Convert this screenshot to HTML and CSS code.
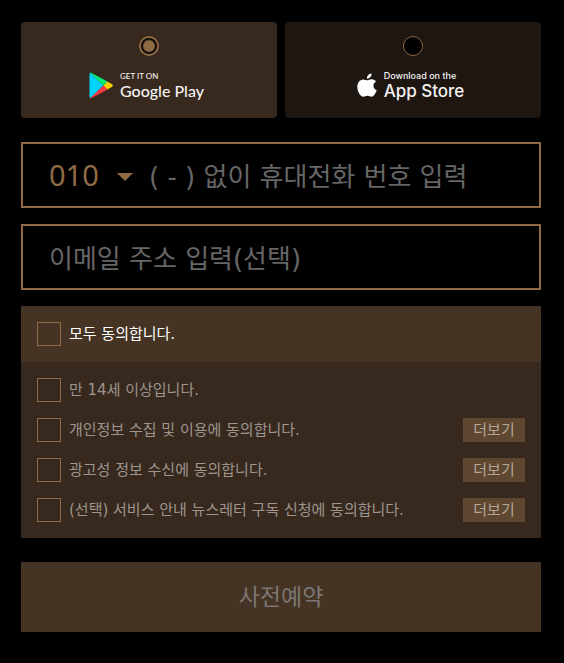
FILE: index.html
```html
<!DOCTYPE html>
<html lang="ko">
<head>
<meta charset="utf-8">
<meta name="viewport" content="width=device-width, initial-scale=1">
<title>사전예약</title>
<link rel="stylesheet" href="styles.css">
</head>
<body>
<form class="form">
  <div class="stores">
    <label class="store">
      <input class="store-radio" type="radio" name="store" checked aria-label="Google Play">
      <span class="brand">
        <svg class="play-icon" viewBox="0 0 24 27" aria-hidden="true">
          <path fill="#00d2ff" d="M1 .7Q.5 1 .5 2v23q0 1 .5 1.3L14.500 13.500z"/>
          <path fill="#00ee76" d="M1 .7Q1.600.3 2.600.9L18.500 9.600l-4 3.900z"/>
          <path fill="#ff3a44" d="M1 26.300q.6.4 1.600-.2l15.900-8.700-4-3.900z"/>
          <path fill="#ffd000" d="M18.500 9.600l4.600 2.700q1.400 1.200 0 2.400l-4.600 2.700-4-3.900z"/>
        </svg>
        <span class="brand-text google">
          <span class="brand-small">GET IT ON</span>
          <span class="brand-name">Google Play</span>
        </span>
      </span>
    </label>
    <label class="store">
      <input class="store-radio" type="radio" name="store" aria-label="App Store">
      <span class="brand">
        <svg class="apple-icon" viewBox="0 0 20 25" aria-hidden="true">
          <path fill="#fff" d="M14.600.5c.2 2.700-2 5.300-4.700 5.200C9.700 3.200 12 .7 14.600.5zM10.300 7.300c1 0 2.400-1.200 4.500-1.100 1.800.1 3.300.9 4.200 2.300-3.700 2.300-3.200 7.200.7 8.800-.8 2.300-2.700 6.300-5 6.400-1.500.1-2.300-.9-4.200-.9s-2.700 1-4.200.9C3.200 23.600.4 18.600.3 14.300.2 9.600 2.800 6.600 6.100 6.400c1.800 0 3.200.9 4.200.9z"/>
        </svg>
        <span class="brand-text apple">
          <span class="brand-small">Download on the</span>
          <span class="brand-name">App Store</span>
        </span>
      </span>
    </label>
  </div>

  <div class="field">
    <span class="prefix">
      <select class="prefix-select" aria-label="전화번호 앞자리">
        <option>010</option>
      </select>
      <svg class="arrow" viewBox="0 0 16 8" aria-hidden="true"><path fill="#916a46" d="M0 0h16L8 8z"/></svg>
    </span>
    <input class="text" type="tel" placeholder="( - ) 없이 휴대전화 번호 입력" aria-label="휴대전화 번호">
  </div>
  <div class="field">
    <input class="text" type="email" placeholder="이메일 주소 입력(선택)" aria-label="이메일 주소">
  </div>

  <div class="terms">
    <div class="term term-all">
      <label class="check"><input type="checkbox">모두 동의합니다.</label>
    </div>
    <div class="term-list">
      <div class="term">
        <label class="check"><input type="checkbox">만 14세 이상입니다.</label>
      </div>
      <div class="term">
        <label class="check"><input type="checkbox">개인정보 수집 및 이용에 동의합니다.</label>
        <button class="more" type="button">더보기</button>
      </div>
      <div class="term">
        <label class="check"><input type="checkbox">광고성 정보 수신에 동의합니다.</label>
        <button class="more" type="button">더보기</button>
      </div>
      <div class="term">
        <label class="check"><input type="checkbox">(선택) 서비스 안내 뉴스레터 구독 신청에 동의합니다.</label>
        <button class="more" type="button">더보기</button>
      </div>
    </div>
  </div>

  <button class="submit" type="submit">사전예약</button>
</form>
</body>
</html>
```
FILE: styles.css
```css
* {
  box-sizing: border-box;
}

body {
  margin: 0;
  background: #000;
  color: #fff;
  font-family: "DejaVu Sans", "Noto Sans CJK KR", sans-serif;
  font-size: 15px;
  line-height: 24px;
}

button,
input,
select {
  margin: 0;
  padding: 0;
  border: 0;
  border-radius: 0;
  font: inherit;
}

.form {
  display: flex;
  flex-direction: column;
  gap: 16px;
  padding: 22px 23px 31px 21px;
}

.stores {
  display: grid;
  grid-template-columns: 1fr 1fr;
  gap: 8px;
  margin-bottom: 8px;
}

.store {
  display: flex;
  flex-direction: column;
  align-items: center;
  gap: 12px;
  height: 96px;
  padding-top: 14px;
  border-radius: 4px;
  background: #1d1611;
}

.store:has(:checked) {
  background: #37291e;
}

.store-radio {
  appearance: none;
  width: 20px;
  height: 20px;
  border: 1px solid #916a46;
  border-radius: 50%;
  background: #000;
}

.store-radio:checked {
  border-width: 2px;
  background: radial-gradient(circle, #916a46 5px, #000 7px);
}

.brand {
  display: flex;
  align-items: center;
  height: 34px;
  padding-right: 5px;
}

.play-icon {
  width: 24px;
  height: 27px;
  margin-right: 7px;
}

.apple-icon {
  width: 20px;
  height: 25px;
  margin-right: 7px;
}

.brand-text {
  display: flex;
  flex-direction: column;
  color: #f4f2f1;
  white-space: nowrap;
}

.brand-small {
  font-size: 9px;
  line-height: 12px;
}

.brand-name {
  line-height: 18px;
}

.google {
  font-family: Lato, sans-serif;
  font-weight: 500;
}

.google .brand-small {
  font-size: 8px;
}

.google .brand-name {
  font-size: 16px;
}

.apple {
  font-family: Inter, sans-serif;
  font-weight: 500;
}

.apple .brand-name {
  font-size: 17px;
}

.field {
  display: flex;
  height: 66px;
  padding: 0 26px;
  border: 2px solid #916a46;
}

.prefix {
  display: flex;
  align-items: center;
  position: relative;
  flex: none;
  width: 100px;
}

.prefix-select {
  appearance: none;
  width: 100%;
  height: 100%;
  background: transparent;
  color: #916a46;
  font-family: "Noto Sans", sans-serif;
  font-size: 29px;
}

.arrow {
  position: absolute;
  top: 29px;
  right: 16px;
  width: 16px;
  height: 8px;
  pointer-events: none;
}

.text {
  flex: 1;
  min-width: 0;
  padding-top: 4px;
  background: transparent;
  color: #fff;
  font-size: 26px;
}

.text::placeholder {
  color: #666;
  opacity: 1;
}

.terms {
  margin-bottom: 8px;
  background: #37291e;
  color: #9d958e;
}

.term {
  display: flex;
  align-items: center;
  justify-content: space-between;
}

.term-all {
  padding: 16px;
  background: #453324;
  color: #fff;
}

.term-list {
  display: flex;
  flex-direction: column;
  gap: 16px;
  padding: 16px;
}

.check {
  display: flex;
  align-items: center;
  gap: 8px;
}

.check input {
  appearance: none;
  flex: none;
  width: 24px;
  height: 24px;
  border: 1px solid #916a46;
}

.check input:checked {
  background: #916a46;
}

.more {
  flex: none;
  min-width: 62px;
  height: 24px;
  padding: 0 10px;
  background: #5e4630;
  color: #b3a698;
}

.submit {
  height: 70px;
  background: #453324;
  color: #7b7673;
  font-size: 23px;
}
```
